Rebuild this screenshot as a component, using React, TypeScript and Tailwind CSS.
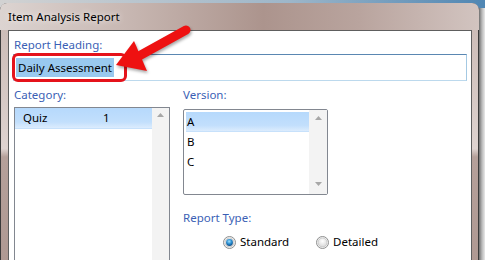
import React from 'react';

const font = { fontFamily: '"Noto Sans", "Open Sans", sans-serif' };

function Radio({ checked }: { checked?: boolean }) {
  return (
    <svg width="13" height="13" viewBox="0 0 13 13">
      <defs>
        <radialGradient id="rg-off" cx="50%" cy="35%" r="70%">
          <stop offset="0%" stopColor="#ffffff" />
          <stop offset="100%" stopColor="#d4d4d4" />
        </radialGradient>
        <radialGradient id="rg-on" cx="45%" cy="35%" r="65%">
          <stop offset="0%" stopColor="#9fe0ff" />
          <stop offset="55%" stopColor="#2a8ed0" />
          <stop offset="100%" stopColor="#0c4d88" />
        </radialGradient>
      </defs>
      <circle cx="6.5" cy="6.5" r="6" fill="#f4f4f4" stroke="#8e8f8f" />
      <circle cx="6.5" cy="6.5" r="4.5" fill="url(#rg-off)" stroke="#b9b9b9" strokeWidth="0.6" />
      {checked && <circle cx="6.5" cy="6.5" r="3.4" fill="url(#rg-on)" />}
    </svg>
  );
}

function ScrollArrow({ down }: { down?: boolean }) {
  return (
    <svg width="7" height="4" viewBox="0 0 7 4">
      <path d={down ? 'M0 0 H7 L3.5 4 Z' : 'M0 4 H7 L3.5 0 Z'} fill="#a7a7a7" />
    </svg>
  );
}

export default function App() {
  const label = 'h-[14px] text-[11.5px] leading-[14px] text-[#3b5fb5]';
  const selRow =
    'bg-[linear-gradient(to_bottom,#b6d9fc,#c2dffc_70%,#dcecfd)] border-b border-[#c7e1fb]';

  return (
    <div
      className="relative flex w-[485px] h-[260px] overflow-hidden bg-[linear-gradient(to_right,#d2d2d2,#9db6c9_60%,#4f86b3)] text-[11.5px] text-black"
      style={font}
    >
      {/* window */}
      <div className="mt-[3px] flex w-[479px] h-[275px] shrink-0 flex-col rounded-t-[7px] border border-[#3a3a3a] bg-[linear-gradient(to_bottom,#c9b8b3,#d6c9c5_35%,#ded3d0_53%,#b5a09a_56%,#ae9892)]">
        {/* title bar */}
        <div className="-mx-[1px] -mt-[1px] flex h-[27px] shrink-0 items-center rounded-t-[7px] pl-[8px] pt-[1px] bg-[linear-gradient(to_right,#dcd4d1,#c9b9b4_25%,#ac948d_55%,#b9a49e_75%,#d2c4c0)]">
          <span className="text-[11.5px] leading-[14px] [text-shadow:0_0_6px_#ffffff]">Item Analysis Report</span>
        </div>
        {/* client area */}
        <div className="ml-[7px] mr-[6px] flex min-h-0 flex-1 flex-col overflow-hidden border border-[#5e5e5e] bg-white pl-[5px]">
          <div className={`${label} mt-[7px] shrink-0`}>Report Heading:</div>
          <div className="-ml-[1px] mt-[2px] flex h-[27px] w-[454px] shrink-0 items-center border border-[#a4c9e3] border-t-[#5a87b2] border-b-[#bcd9ed] pl-[2px]">
            <span className="bg-[#99c9ef] px-[2px] leading-[19px]">Daily Assessment</span>
          </div>

          <div className="mt-[7px] flex shrink-0">
            {/* Category */}
            <div className="flex w-[156px] flex-col">
              <div className={label}>Category:</div>
              <div className="mt-[5px] flex h-[200px] border border-[#828790]">
                <div className="flex-1">
                  <div className={`flex h-[21px] items-center ${selRow}`}>
                    <span className="ml-[8px] w-[80px]">Quiz</span>
                    <span>1</span>
                  </div>
                </div>
                <div className="flex w-[17px] justify-center bg-[#f3f3f3] pt-[5px]">
                  <ScrollArrow />
                </div>
              </div>
            </div>

            {/* Version + Report type */}
            <div className="ml-[13px] flex flex-col">
              <div className={label}>Version:</div>
              <div className="mt-[7px] flex h-[86px] w-[145px] rounded-[2px] border border-[#828790]">
                <div className="flex-1 pl-[2px] pt-[2px]">
                  <div className={`flex h-[20px] items-center pl-[1px] ${selRow}`}>A</div>
                  <div className="flex h-[20px] items-center pl-[1px]">B</div>
                  <div className="flex h-[20px] items-center pl-[1px]">C</div>
                </div>
                <div className="flex w-[18px] flex-col items-center justify-between bg-[#f3f3f3] pb-[8px] pt-[6px]">
                  <ScrollArrow />
                  <ScrollArrow down />
                </div>
              </div>
              <div className={`${label} mt-[16px]`}>Report Type:</div>
              <div className="ml-[40px] mt-[10px] flex h-[14px] items-center">
                <div className="flex w-[93px] items-center gap-[4px]">
                  <Radio checked />
                  <span className="leading-[14px]">Standard</span>
                </div>
                <div className="flex items-center gap-[4px]">
                  <Radio />
                  <span className="leading-[14px]">Detailed</span>
                </div>
              </div>
            </div>
          </div>
        </div>
      </div>
      {/* window shadow */}
      <div className="mt-[8px] w-[6px] shrink-0 bg-[linear-gradient(to_right,#6f6f6f,#b9b9b9_50%,#e9e9e9)]" />

      {/* red annotation box */}
      <div className="absolute left-[12px] top-[53px] h-[29px] w-[115px] rounded-[6px] border-[3px] border-[#e5131b]" />

      {/* red arrow */}
      <svg
        className="absolute left-0 top-0"
        width="485"
        height="260"
        viewBox="0 0 485 260"
        style={{ filter: 'drop-shadow(1px 2px 1.5px rgba(0,0,0,0.35))' }}
      >
        <line x1="186" y1="30" x2="139" y2="56" stroke="#ee1111" strokeWidth="9" strokeLinecap="round" />
        <polygon points="116,65 134,41 147,71" fill="#ee1111" />
      </svg>
    </div>
  );
}
